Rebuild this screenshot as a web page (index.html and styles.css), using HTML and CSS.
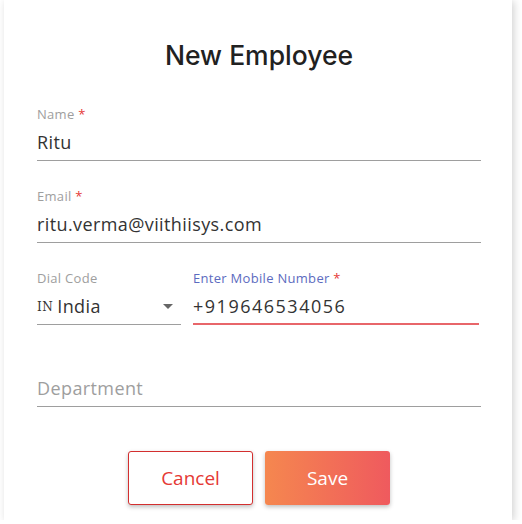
FILE: index.html
```html
<!DOCTYPE html>
<html lang="en">
<head>
<meta charset="utf-8">
<title>New Employee</title>
<link rel="stylesheet" href="styles.css">
</head>
<body>
<div class="card">
  <h1 class="title">New Employee</h1>
  <form class="form">
    <div class="field">
      <label class="label">Name <span class="req">*</span></label>
      <div class="value">Ritu</div>
    </div>
    <div class="field">
      <label class="label">Email <span class="req">*</span></label>
      <div class="value">ritu.verma@viithiisys.com</div>
    </div>
    <div class="row">
      <div class="field dial">
        <label class="label">Dial Code</label>
        <div class="value select"><span class="flag">IN</span><span class="country">India</span><span class="arrow"></span></div>
      </div>
      <div class="field mobile">
        <label class="label focus">Enter Mobile Number <span class="req">*</span></label>
        <div class="value phone">+919646534056</div>
      </div>
    </div>
    <div class="field empty">
      <div class="value placeholder">Department</div>
    </div>
  </form>
  <div class="actions">
    <button class="btn cancel" type="button">Cancel</button>
    <button class="btn save" type="button">Save</button>
  </div>
</div>
</body>
</html>
```
FILE: styles.css
```css
html, body {
  margin: 0;
  padding: 0;
  background: #ffffff;
}
body {
  font-family: "Open Sans", "Lato", sans-serif;
  color: #333;
}
.card {
  margin-left: 4px;
  width: 508px;
  height: 520px;
  box-sizing: border-box;
  background: #fff;
  box-shadow: 2px 1px 8px rgba(0,0,0,0.18);
  padding: 39px 31px 0 33px;
  display: flex;
  flex-direction: column;
}
.title {
  margin: 0;
  height: 32px;
  line-height: 32px;
  font-family: "Inter", "Open Sans", sans-serif;
  font-size: 26.5px;
  font-weight: 500;
  color: #212121;
  text-align: center;
}
.form {
  margin-top: 35px;
  display: flex;
  flex-direction: column;
  gap: 27px;
}
.field {
  display: flex;
  flex-direction: column;
  border-bottom: 1px solid #9e9e9e;
  padding-bottom: 4px;
}
.label {
  font-size: 13px;
  line-height: 16px;
  letter-spacing: 0.3px;
  color: #9e9e9e;
  margin-bottom: 6px;
}
.label.focus {
  color: #5c6bc0;
}
.req {
  color: #e53935;
}
.value {
  font-size: 18px;
  line-height: 28px;
  height: 28px;
  letter-spacing: 0.4px;
  color: #333;
}
.phone {
  letter-spacing: 1.5px;
}
.row {
  display: flex;
  gap: 12px;
}
.dial {
  width: 144px;
  box-sizing: border-box;
}
.mobile {
  width: 286px;
  box-sizing: border-box;
  border-bottom: 2px solid #e8666a;
  padding-bottom: 3px;
}
.select {
  display: flex;
  align-items: center;
}
.flag {
  font-family: "DejaVu Serif", serif;
  font-size: 12px;
  letter-spacing: 0.5px;
  margin-right: 4px;
  margin-top: 2px;
  color: #333;
}
.country {
  flex: 1;
}
.arrow {
  width: 0;
  height: 0;
  border-left: 5px solid transparent;
  border-right: 5px solid transparent;
  border-top: 5px solid #666;
  margin-right: 8px;
}
.empty {
  padding-top: 22px;
}
.placeholder {
  color: #9e9e9e;
}
.actions {
  margin-top: 44px;
  display: flex;
  justify-content: center;
  gap: 12px;
}
.btn {
  width: 125px;
  height: 54px;
  border-radius: 3px;
  font-family: "Open Sans", "Lato", sans-serif;
  font-size: 19px;
  cursor: pointer;
  box-shadow: 0 2px 4px rgba(0,0,0,0.25);
}
.cancel {
  background: #fff;
  border: 1.5px solid #d32f2f;
  color: #e53935;
}
.save {
  border: none;
  color: #fff;
  background: linear-gradient(to right, #f5874f, #ef5a5e);
}
```
